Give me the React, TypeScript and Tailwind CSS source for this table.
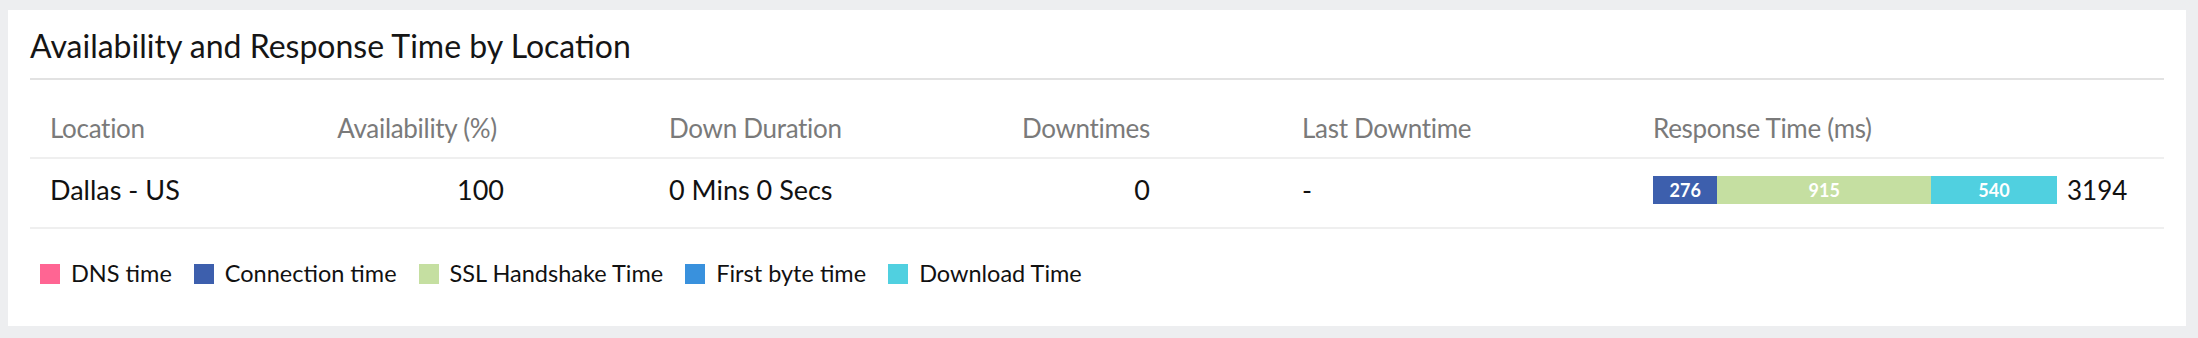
import React from 'react';

type Segment = { value: number; color: string };

const segments: Segment[] = [
  { value: 276, color: '#3d5fad' },
  { value: 915, color: '#c5dfa1' },
  { value: 540, color: '#50d0e0' },
];

const legend = [
  { label: 'DNS time', color: '#ff6593' },
  { label: 'Connection time', color: '#3d5fad' },
  { label: 'SSL Handshake Time', color: '#c5dfa1' },
  { label: 'First byte time', color: '#3991dd' },
  { label: 'Download Time', color: '#50d0e0' },
];

const BAR_WIDTH = 404;

const ResponseBar: React.FC = () => {
  const total = segments.reduce((s, x) => s + x.value, 0);
  return (
    <div className="flex items-center gap-[10px]">
      <div className="flex h-[28px]" style={{ width: BAR_WIDTH }}>
        {segments.map((seg) => (
          <div
            key={seg.value}
            className="flex h-full items-center justify-center text-[18px] font-bold text-white"
            style={{ width: (seg.value / total) * BAR_WIDTH, backgroundColor: seg.color }}
          >
            {seg.value}
          </div>
        ))}
      </div>
      <span className="text-[26px] text-[#111]">3194</span>
    </div>
  );
};

export default function App() {
  return (
    <div
      className="min-h-[338px] w-full bg-[#edeef0] pt-[10px] pb-[12px] pl-[8px] pr-[12px]"
      style={{ fontFamily: 'Lato, "Liberation Sans", sans-serif' }}
    >
      <div className="h-[316px] bg-white px-[22px]">
        {/* Title */}
        <div className="flex h-[70px] items-center border-b-2 border-[#e2e2e2] pt-[4px]">
          <h2 className="whitespace-nowrap text-[32px] leading-none text-[#151515]">
            Availability and Response Time by Location
          </h2>
        </div>

        {/* Header */}
        <div className="grid h-[79px] grid-cols-[270px_224px_300px_346px_483px_1fr] items-end whitespace-nowrap border-b-2 border-[#efefef] pb-[15px] text-[26px] leading-[28px] tracking-[-0.3px] text-[#7a7a7a]">
          <div className="pl-[20px]">Location</div>
          <div className="pr-[27px] text-right">Availability (%)</div>
          <div className="pl-[145px]">Down Duration</div>
          <div className="pr-[20px] text-right">Downtimes</div>
          <div className="pl-[132px]">Last Downtime</div>
          <div>Response Time (ms)</div>
        </div>

        {/* Row */}
        <div className="grid h-[70px] grid-cols-[270px_224px_300px_346px_483px_1fr] items-center whitespace-nowrap border-b-2 border-[#efefef] pb-[6px] text-[27px] leading-[28px] text-[#111]">
          <div className="pl-[20px]">Dallas - US</div>
          <div className="pr-[20px] text-right">100</div>
          <div className="pl-[145px]">0 Mins 0 Secs</div>
          <div className="pr-[20px] text-right">0</div>
          <div className="pl-[132px]">-</div>
          <ResponseBar />
        </div>

        {/* Legend */}
        <div className="flex h-[95px] items-center gap-[22px] pb-[6px] pl-[10px]">
          {legend.map((item) => (
            <div key={item.label} className="flex items-center gap-[11px]">
              <span className="h-[20px] w-[20px]" style={{ backgroundColor: item.color }} />
              <span className="whitespace-nowrap text-[23.5px] leading-none text-[#111]">{item.label}</span>
            </div>
          ))}
        </div>
      </div>
    </div>
  );
}
